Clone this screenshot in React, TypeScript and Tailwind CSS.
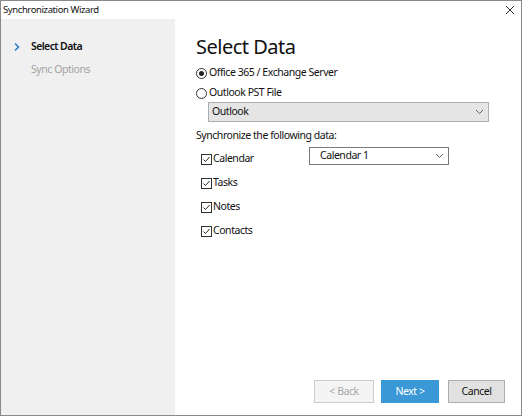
import React from "react";

const font = { fontFamily: '"Noto Sans", "Open Sans", sans-serif' };

function Chevron({ className = "" }: { className?: string }) {
  return (
    <svg width="10" height="10" viewBox="0 0 10 10" className={className}>
      <path d="M3 1.5 L6.5 5 L3 8.5" fill="none" stroke="currentColor" strokeWidth="1.6" />
    </svg>
  );
}

function SmallChevron() {
  return (
    <svg width="9" height="6" viewBox="0 0 9 6">
      <path d="M1 1 L4.5 4.5 L8 1" fill="none" stroke="#606060" strokeWidth="1" />
    </svg>
  );
}

function Radio({ checked }: { checked?: boolean }) {
  return (
    <span className="w-[11px] h-[11px] rounded-full border border-[#333] bg-white flex items-center justify-center shrink-0">
      {checked && <span className="w-[5px] h-[5px] rounded-full bg-[#222]" />}
    </span>
  );
}

function Check() {
  return (
    <span className="w-[11px] h-[11px] border border-[#333] bg-white flex items-center justify-center shrink-0">
      <svg width="9" height="9" viewBox="0 0 9 9">
        <path d="M1.5 4.5 L3.5 6.5 L7.5 2" fill="none" stroke="#222" strokeWidth="1" />
      </svg>
    </span>
  );
}

const items = ["Calendar", "Tasks", "Notes", "Contacts"];

export default function App() {
  return (
    <div
      className="w-[522px] h-[416px] bg-white border border-[#8a8a8a] flex flex-col text-[10.5px] tracking-[-0.45px] text-[#111] overflow-hidden"
      style={font}
    >
      {/* Title bar */}
      <div className="h-[18px] flex items-center justify-between pl-[2px] pr-[6px] shrink-0">
        <span className="text-[9.5px] tracking-[-0.4px]">Synchronization Wizard</span>
        <svg width="10" height="10" viewBox="0 0 10 10">
          <path d="M1 1 L9 9 M9 1 L1 9" stroke="#333" strokeWidth="1" />
        </svg>
      </div>

      <div className="flex flex-1 min-h-0">
        {/* Sidebar */}
        <div className="w-[174px] bg-[#f0f0f0] pt-[21px] flex flex-col gap-[9px] shrink-0">
          <div className="flex items-center pl-[11px] gap-[9px] h-[14px]">
            <Chevron className="text-[#2e7fd3]" />
            <span className="font-semibold tracking-[-0.6px]">Select Data</span>
          </div>
          <div className="pl-[30px] h-[14px] flex items-center text-[#a3a3a3]">Sync Options</div>
        </div>

        {/* Content */}
        <div className="flex-1 flex flex-col pl-[21px] pr-[16px]">
          <h1 className="text-[20px] tracking-[-0.5px] leading-none mt-[18px] mb-[7px] text-[#111]">Select Data</h1>

          <label className="flex items-center gap-[2px] h-[18px]">
            <Radio checked />
            <span>Office 365 / Exchange Server</span>
          </label>
          <label className="flex items-center gap-[2px] h-[18px] mt-[2px]">
            <Radio />
            <span>Outlook PST File</span>
          </label>

          <div className="ml-[12px] h-[20px] w-[281px] bg-[#e5e5e5] border border-[#adadad] flex items-center justify-between pl-[3px] pr-[4px]">
            <span>Outlook</span>
            <SmallChevron />
          </div>

          <div className="mt-[6px] h-[16px] flex items-center">Synchronize the following data:</div>

          <div className="flex mt-[3px]">
            <div className="flex flex-col gap-[6px] pl-[5px] pt-[3px] w-[113px]">
              {items.map((it) => (
                <label key={it} className="flex items-center gap-[1px] h-[18px]">
                  <Check />
                  <span>{it}</span>
                </label>
              ))}
            </div>
            <div className="h-[18px] w-[140px] border border-[#7a7a7a] bg-white flex items-center justify-between pl-[10px] pr-[4px]">
              <span>Calendar 1</span>
              <SmallChevron />
            </div>
          </div>

          <div className="flex-1" />

          <div className="flex justify-end gap-[7px] mb-[12px] pr-0">
            <button className="w-[60px] h-[23px] border border-[#cccccc] bg-[#f4f4f4] text-[#a8a8a8]">&lt; Back</button>
            <button className="w-[58px] h-[23px] bg-[#3b98d6] text-white mr-[2px]">Next &gt;</button>
            <button className="w-[57px] h-[23px] border border-[#adadad] bg-[#e1e1e1]">Cancel</button>
          </div>
        </div>
      </div>
    </div>
  );
}
